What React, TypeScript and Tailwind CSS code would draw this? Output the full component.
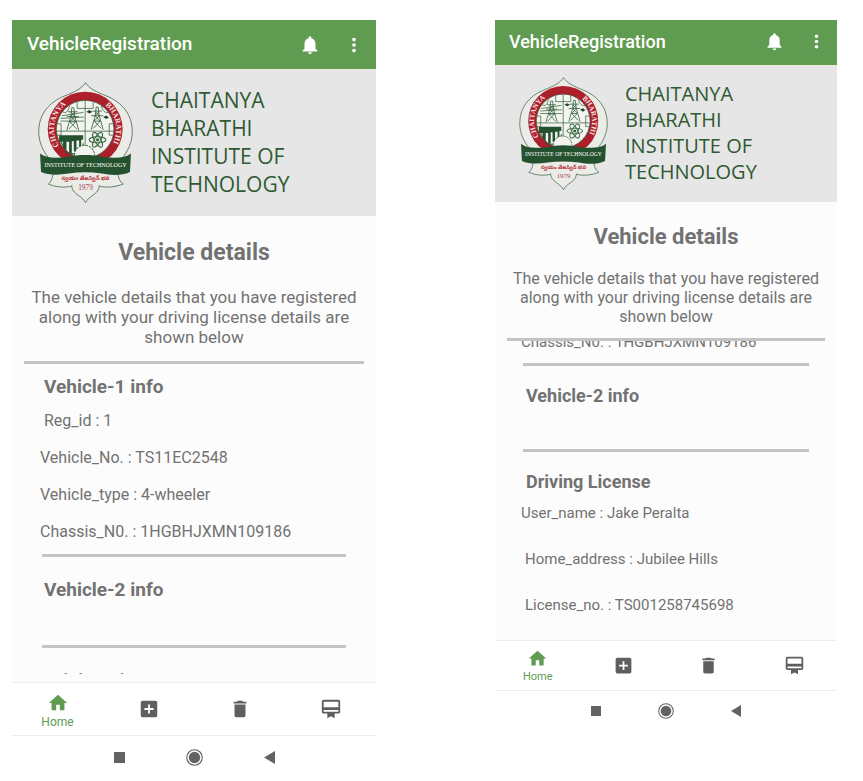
import { clsx } from 'clsx';
import {
  MdAddBox,
  MdCardMembership,
  MdDelete,
  MdHome,
  MdMoreVert,
  MdNotifications,
} from 'react-icons/md';

type Size = 'lg' | 'sm';

interface InfoRow {
  text: string;
  inset?: boolean;
}

interface InfoSection {
  title?: string;
  rows: InfoRow[];
}

const topSections: InfoSection[] = [
  {
    title: 'Vehicle-1 info',
    rows: [
      { text: 'Reg_id : 1', inset: true },
      { text: 'Vehicle_No. : TS11EC2548' },
      { text: 'Vehicle_type : 4-wheeler' },
      { text: 'Chassis_N0. : 1HGBHJXMN109186' },
    ],
  },
  { title: 'Vehicle-2 info', rows: [] },
  { title: 'Driving License', rows: [] },
];

const scrolledSections: InfoSection[] = [
  { rows: [{ text: 'Chassis_N0. : 1HGBHJXMN109186' }] },
  { title: 'Vehicle-2 info', rows: [] },
  {
    title: 'Driving License',
    rows: [
      { text: 'User_name : Jake Peralta' },
      { text: 'Home_address : Jubilee Hills', inset: true },
      { text: 'License_no. : TS001258745698', inset: true },
    ],
  },
];

const navItems = [
  { label: 'Add vehicle', Icon: MdAddBox },
  { label: 'Delete vehicle', Icon: MdDelete },
  { label: 'Membership card', Icon: MdCardMembership },
];

function Tower({ x, y }: { x: number; y: number }) {
  return (
    <g transform={`translate(${x} ${y})`} fill="none" stroke="#2c5a35" strokeWidth="2.4">
      <path d="M-3 0h6l3 26 12 42M-3 0l-3 26-12 42" />
      <path d="M-14 12h28M-18 26h36M-5 14l11 12-15 16 21 22M5 14L-6 26 9 42-12 64M-9 42H9" />
    </g>
  );
}

function Emblem({ id, className }: { id: string; className: string }) {
  return (
    <svg viewBox="20 30 290 368" className={className} role="img" aria-label="Institute emblem">
      <defs>
        <path id={id} d="M109 249A93 93 0 1 1 219 249" />
      </defs>

      <g fill="#ebebe8" stroke="#4b7254" strokeWidth="2.6" strokeLinejoin="round">
        <path d="M68 300C68 320 62 332 54 338C76 348 104 350 126 344L204 344C226 350 254 348 278 338C268 332 262 320 262 300Z" />
        <path d="M128 322C118 346 126 360 142 371C154 379 161 386 165 394C169 386 176 379 188 371C204 360 212 346 202 322" />
        <path d="M165 35C154 53 132 63 104 74C54 94 26 130 25 180C25 214 38 240 58 264H272C292 240 305 214 305 180C304 130 276 94 226 74C198 63 176 53 165 35Z" />
      </g>
      <path d="M118 312h94v30h-94z" fill="#ebebe8" />

      <circle cx="164" cy="174" r="112" fill="#ad1f2b" />
      <circle cx="164" cy="174" r="86" fill="#f3f4f0" stroke="#2c5a35" strokeWidth="2" />

      <g fill="none" stroke="#2c5a35" strokeWidth="2.2">
        <path d="M164 90V232M80 180H248M140 94V112H188V94M80 158H92V192H80M248 158H236V192H248" />
        <path d="M96 122C112 130 112 116 118 104M212 104C216 118 222 128 238 124M94 134L158 124M90 142L160 138M90 150H160" />
      </g>
      <Tower x={127} y={110} />
      <Tower x={200} y={108} />
      <path d="M168 122l8-5 10 5-9 5zM218 138l9-5 8 6-8 5z" fill="#1f4428" />

      <path d="M86 192H158V206H152V238H146V208H138V240H130V210H124V246H116V212H108V238L98 230V212H86Z" fill="#25522e" />
      <path d="M88 206L112 248H158V216" fill="none" stroke="#25522e" strokeWidth="3" />

      <g fill="none" stroke="#3a6a43" strokeWidth="3">
        <ellipse cx="201" cy="206" rx="25" ry="9" />
        <ellipse cx="201" cy="206" rx="25" ry="9" transform="rotate(60 201 206)" />
        <ellipse cx="201" cy="206" rx="25" ry="9" transform="rotate(120 201 206)" />
      </g>
      <circle cx="201" cy="206" r="5" fill="#3a6a43" />
      <path d="M132 252A30 30 0 0 1 192 252" fill="#f3f4f0" stroke="#3a6a43" strokeWidth="3" strokeDasharray="7 3" />

      <text fill="#f4e4e2" fontSize="23" fontWeight="700" className="font-['Liberation_Serif',serif]">
        <textPath href={`#${id}`} startOffset="34">CHAITANYA</textPath>
      </text>
      <text fill="#f4e4e2" fontSize="23" fontWeight="700" className="font-['Liberation_Serif',serif]">
        <textPath href={`#${id}`} startOffset="298">BHARATHI</textPath>
      </text>

      <path
        d="M29 247C48 262 78 262 110 257C146 250 182 250 218 257C252 262 282 262 301 247L298 302C274 314 240 312 214 307C180 302 148 302 114 307C84 312 54 312 32 302Z"
        fill="#25522e"
      />
      <text x="165" y="286" textAnchor="middle" fill="#ffffff" fontSize="18" className="font-['Liberation_Serif',serif]">
        INSTITUTE OF TECHNOLOGY
      </text>
      <text x="165" y="327" textAnchor="middle" fill="#b51f2d" fontSize="16" fontWeight="700" className="font-['Noto_Sans_Telugu','Noto_Sans',sans-serif]">
        స్వయం తేజస్విన్ భవ
      </text>
      <text x="165" y="356" textAnchor="middle" fill="#a8434d" fontSize="22" className="font-['Liberation_Serif',serif]">
        1979
      </text>
    </svg>
  );
}

function Section({ section, size, last }: { section: InfoSection; size: Size; last: boolean }) {
  const lg = size === 'lg';
  return (
    <section>
      {section.title && (
        <h2
          className={clsx(
            'font-bold',
            lg ? 'pl-8 text-[19px] leading-6' : 'pl-[31px] text-[18px] leading-[22px]',
          )}
        >
          {section.title}
        </h2>
      )}
      {section.rows.length > 0 && (
        <div
          className={clsx(
            'flex flex-col',
            lg ? 'gap-[17px] text-[16px] leading-5' : 'gap-[26px] text-[15px] leading-5',
            section.title && (lg ? 'mt-3' : 'mt-[10px]'),
          )}
        >
          {section.rows.map(row => (
            <p
              key={row.text}
              className={lg ? (row.inset ? 'pl-8' : 'pl-7') : (row.inset ? 'pl-[30px]' : 'pl-[26px]')}
            >
              {row.text}
            </p>
          ))}
        </div>
      )}
      {!last && (
        <hr
          className={clsx(
            'border-0 border-t-3 border-[#c4c4c4]',
            lg ? 'mx-[30px] mb-[21px]' : 'mx-7 mb-[19px]',
            section.rows.length > 0 ? (lg ? 'mt-3' : 'mt-[11px]') : (lg ? 'mt-[43px]' : 'mt-[42px]'),
          )}
        />
      )}
    </section>
  );
}

function Phone({ size, sections }: { size: Size; sections: InfoSection[] }) {
  const lg = size === 'lg';
  const iconSize = lg ? 'size-[22px]' : 'size-[21px]';

  return (
    <article className="min-w-0 bg-[#fcfcfc] text-[#727272]">
      <header
        className={clsx(
          'flex items-center bg-[#5f9b50] text-white',
          lg ? 'h-[49px] pl-[15px] pr-[11px]' : 'h-[45px] pb-[2px] pl-[14px] pr-[10px]',
        )}
      >
        <h1 className={clsx('flex-1 font-medium', lg ? 'text-[19px]' : 'text-[18px]')}>VehicleRegistration</h1>
        <button type="button" aria-label="Notifications" className={lg ? 'mr-[22px]' : 'mr-[21px]'}>
          <MdNotifications className={iconSize} />
        </button>
        <button type="button" aria-label="More options">
          <MdMoreVert className={iconSize} />
        </button>
      </header>

      <div
        className={clsx(
          'flex items-center border-t border-[#efe9e2] bg-[#e6e6e6] pb-[2px]',
          lg ? 'h-[147px] gap-[17px] pl-[25px]' : 'h-[137px] gap-[16px] pl-[23px]',
        )}
      >
        <Emblem
          id={lg ? 'ring-text-lg' : 'ring-text-sm'}
          className={lg ? 'h-[123px] w-[97px] shrink-0' : 'h-[115px] w-[91px] shrink-0'}
        />
        <p
          className={clsx(
            "font-['Open_Sans',sans-serif] text-[#2f5a33]",
            lg ? 'text-[21px] leading-7' : 'text-[20px] leading-[26px]',
          )}
        >
          CHAITANYA
          <br />
          BHARATHI
          <br />
          INSTITUTE OF
          <br />
          TECHNOLOGY
        </p>
      </div>

      <div className={clsx('text-center', lg ? 'pt-[21px]' : 'pt-[19px]')}>
        <h2 className={clsx('font-bold', lg ? 'text-[23px] leading-8' : 'text-[22px] leading-8')}>Vehicle details</h2>
        <p className={clsx('px-3', lg ? 'mt-[18px] text-[17px] leading-5' : 'mt-4 text-[16px] leading-[19px]')}>
          The vehicle details that you have registered
          <br />
          along with your driving license details are
          <br />
          shown below
        </p>
      </div>
      <hr className={clsx('mx-3 border-0 border-t-3 border-[#c4c4c4]', lg ? 'mt-[14px]' : 'mt-3')} />

      <div
        className={clsx(
          'flex flex-col overflow-hidden',
          lg ? 'mb-2 h-[310px] pt-[11px]' : 'h-[299px] justify-end pb-[25px]',
        )}
      >
        {sections.map((section, index) => (
          <Section key={index} section={section} size={size} last={index === sections.length - 1} />
        ))}
      </div>

      <nav
        className={clsx(
          'grid grid-cols-4 border-y border-[#ededed] bg-white text-[#5f5f5f]',
          lg ? 'h-[54px]' : 'h-[51px]',
        )}
      >
        <a
          href="#home"
          className={clsx(
            'flex flex-col items-center justify-center text-[#5f9b50]',
            lg ? 'pt-[3px] text-[12px] leading-4' : 'pt-[2px] text-[11px] leading-4',
          )}
        >
          <MdHome className={iconSize} />
          Home
        </a>
        {navItems.map(({ label, Icon }) => (
          <a key={label} href="#" aria-label={label} className="flex items-center justify-center">
            <Icon className={iconSize} />
          </a>
        ))}
      </nav>

      <div
        className={clsx(
          'flex items-center justify-center bg-white text-[#636363]',
          lg ? 'h-[43px] gap-[61px]' : 'h-[39px] gap-[57px]',
        )}
      >
        <button type="button" aria-label="Recent apps" className={lg ? 'size-[11px] bg-[#636363]' : 'size-[10px] bg-[#636363]'} />
        <button type="button" aria-label="Home screen">
          <svg viewBox="0 0 18 18" className={lg ? 'size-[17px]' : 'size-4'}>
            <circle cx="9" cy="9" r="8.2" fill="none" stroke="currentColor" strokeWidth="1.2" />
            <circle cx="9" cy="9" r="6" fill="currentColor" />
          </svg>
        </button>
        <button type="button" aria-label="Back">
          <svg viewBox="0 0 11 13" className={lg ? 'h-[13px] w-[11px]' : 'h-3 w-[10px]'}>
            <path d="M11 0v13L0 6.500z" fill="currentColor" />
          </svg>
        </button>
      </div>
    </article>
  );
}

export default function App() {
  return (
    <main className="grid min-h-screen grid-cols-[364fr_342fr] items-start gap-[119px] bg-white pb-1 pl-3 pr-[26px] pt-5 font-['Roboto',sans-serif]">
      <Phone size="lg" sections={topSections} />
      <Phone size="sm" sections={scrolledSections} />
    </main>
  );
}
